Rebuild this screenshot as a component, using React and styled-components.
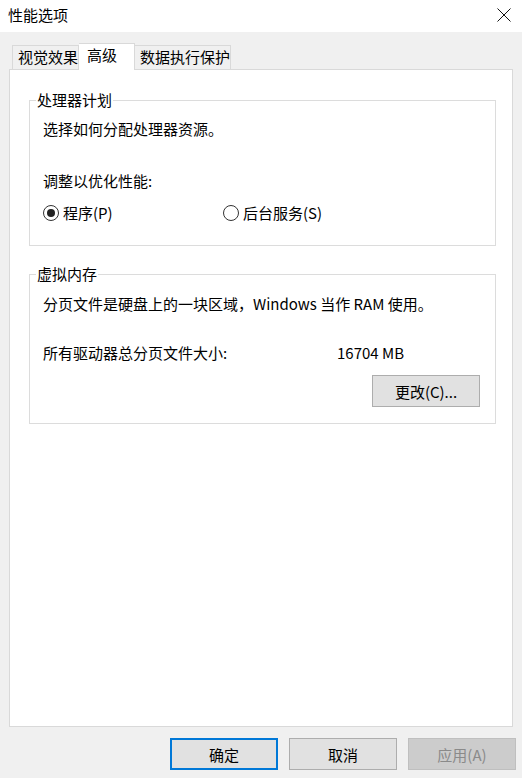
import React from 'react'
import styled, { createGlobalStyle } from 'styled-components'

const GlobalStyle = createGlobalStyle`
    html, body {
        margin: 0;
        padding: 0;
        background: #f0f0f0;
    }
    body {
        font-family: "Noto Sans CJK SC", "Noto Sans", "Liberation Sans", sans-serif;
        font-size: 15px;
        color: #000;
    }
`

const Window = styled.div`
    width: 522px;
    height: 778px;
    display: flex;
    flex-direction: column;
    background: #f0f0f0;
    overflow: hidden;
`

const TitleBar = styled.div`
    height: 32px;
    flex: none;
    background: #fff;
    display: flex;
    align-items: center;
    justify-content: space-between;
    padding: 0 11px 0 8px;
    box-sizing: border-box;
`

const Title = styled.span`
    font-size: 15px;
    line-height: 20px;
    margin-top: -2px;
`

const CloseButton = styled.button`
    border: 0;
    background: transparent;
    padding: 0;
    width: 14px;
    height: 14px;
    margin-top: -2px;
    display: flex;
    cursor: pointer;
`

const TabRow = styled.div`
    display: flex;
    align-items: flex-start;
    height: 27px;
    margin: 11px 0 0 12px;
    flex: none;
`

const Tab = styled.div`
    position: relative;
    box-sizing: border-box;
    width: ${p => p.$width}px;
    height: ${p => (p.$active ? 27 : 24)}px;
    margin-top: ${p => (p.$active ? 0 : 2)}px;
    padding-left: ${p => (p.$active ? 8 : 5)}px;
    line-height: 22px;
    border: 1px solid #d9d9d9;
    border-bottom: none;
    background: ${p => (p.$active ? '#fff' : '#f0f0f0')};
    z-index: ${p => (p.$active ? 1 : 0)};
    white-space: nowrap;
    & + & {
        border-left: ${p => (p.$active ? '1px solid #d9d9d9' : 'none')};
    }
`

const Panel = styled.div`
    flex: 1;
    margin: -1px 9px 0 9px;
    background: #fff;
    border: 1px solid #d9d9d9;
    padding: 20px 16px 0 19px;
    display: flex;
    flex-direction: column;
    gap: 18px;
`

const Group = styled.fieldset`
    margin: 0;
    padding: 0;
    border: 1px solid #dcdcdc;
    min-width: 0;
`

const Legend = styled.legend`
    margin-left: 6px;
    padding: 0 1px;
    line-height: 20px;
    font-size: 15px;
`

const GroupBody = styled.div`
    padding: ${p => p.$pad};
    display: flex;
    flex-direction: column;
`

const Line = styled.div`
    line-height: 20px;
    margin-top: ${p => p.$top || 0}px;
    white-space: nowrap;
`

const RadioRow = styled.div`
    display: grid;
    grid-template-columns: 180px auto;
    margin-top: 12px;
    line-height: 20px;
`

const RadioLabel = styled.label`
    display: flex;
    align-items: center;
    gap: 4px;
    white-space: nowrap;
`

const RadioCircle = styled.span`
    width: 16px;
    height: 16px;
    box-sizing: border-box;
    border-radius: 50%;
    border: 1.5px solid #333;
    display: flex;
    align-items: center;
    justify-content: center;
    background: #fff;
    &::after {
        content: '';
        width: 8px;
        height: 8px;
        border-radius: 50%;
        background: ${p => (p.$checked ? '#222' : 'transparent')};
    }
`

const SizeRow = styled.div`
    display: grid;
    grid-template-columns: 294px auto;
    line-height: 20px;
    margin-top: 29px;
    white-space: nowrap;
`

const ButtonRight = styled.div`
    display: flex;
    justify-content: flex-end;
    margin-top: 12px;
`

const Button = styled.button`
    box-sizing: border-box;
    width: 108px;
    height: 32px;
    padding: 0;
    font-family: inherit;
    font-size: 15px;
    color: ${p => (p.disabled ? '#8a8a8a' : '#000')};
    background: ${p => (p.disabled ? '#cccccc' : '#e1e1e1')};
    border: ${p => (p.$primary ? '2px solid #0078d7' : p.disabled ? '1px solid #bfbfbf' : '1px solid #adadad')};
    cursor: default;
`

const Footer = styled.div`
    flex: none;
    display: flex;
    justify-content: flex-end;
    gap: 11px;
    margin: 11px 6px 8px 0;
`

function CloseIcon() {
    return (
        <svg width="14" height="14" viewBox="0 0 14 14">
            <path d="M0.5 0.5 L13.5 13.5 M13.5 0.5 L0.5 13.5" stroke="#111" strokeWidth="1" fill="none" />
        </svg>
    )
}

function Radio({ checked, children }) {
    return (
        <RadioLabel>
            <RadioCircle $checked={checked} />
            {children}
        </RadioLabel>
    )
}

export default function App() {
    return (
        <Window>
            <GlobalStyle />
            <TitleBar>
                <Title>性能选项</Title>
                <CloseButton aria-label="关闭">
                    <CloseIcon />
                </CloseButton>
            </TitleBar>

            <TabRow>
                <Tab $width={67}>视觉效果</Tab>
                <Tab $width={56} $active>高级</Tab>
                <Tab $width={96}>数据执行保护</Tab>
            </TabRow>

            <Panel>
                <Group>
                    <Legend>处理器计划</Legend>
                    <GroupBody $pad="0 13px 22px 13px">
                        <Line $top={9}>选择如何分配处理器资源。</Line>
                        <Line $top={32}>调整以优化性能:</Line>
                        <RadioRow>
                            <Radio checked>程序(P)</Radio>
                            <Radio>后台服务(S)</Radio>
                        </RadioRow>
                    </GroupBody>
                </Group>

                <Group>
                    <Legend>虚拟内存</Legend>
                    <GroupBody $pad="0 15px 16px 13px">
                        <Line $top={10}>分页文件是硬盘上的一块区域，Windows 当作 RAM 使用。</Line>
                        <SizeRow>
                            <span>所有驱动器总分页文件大小:</span>
                            <span>16704 MB</span>
                        </SizeRow>
                        <ButtonRight>
                            <Button>更改(C)...</Button>
                        </ButtonRight>
                    </GroupBody>
                </Group>
            </Panel>

            <Footer>
                <Button $primary>确定</Button>
                <Button>取消</Button>
                <Button disabled>应用(A)</Button>
            </Footer>
        </Window>
    )
}
